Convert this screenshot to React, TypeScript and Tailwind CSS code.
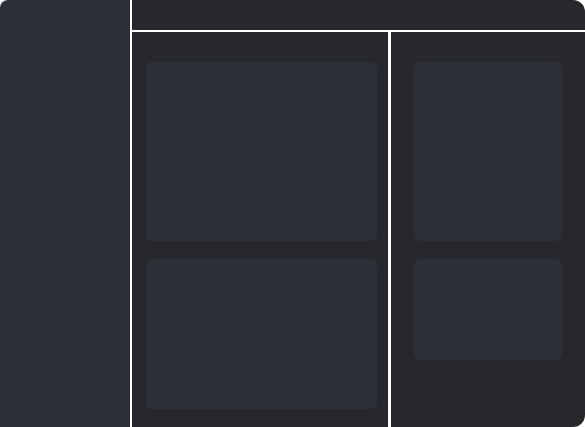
export default function App() {
  return (
    <div className="w-[585px] h-[427px] bg-white">
      <div className="w-full h-full rounded-tl-[8px] rounded-tr-[12px] rounded-br-[12px] rounded-bl-none overflow-hidden flex gap-[2px] bg-white">
        <div className="w-[130px] h-full bg-[#2c2f38]" />
        <div className="flex-1 flex flex-col gap-[2px]">
          <div className="h-[30px] bg-[#27282b]" />
          <div className="flex-1 flex gap-[3px]">
            <div className="w-[256px] bg-[#27282b] pt-[30px] pl-[14px] pr-[11px] flex flex-col gap-[18px]">
              <div className="h-[179px] rounded-[6px] bg-[#2d3039]" />
              <div className="h-[150px] rounded-[6px] bg-[#2d3039]" />
            </div>
            <div className="flex-1 bg-[#27282b] pt-[30px] pl-[23px] pr-[23px] flex flex-col gap-[18px]">
              <div className="h-[179px] rounded-[6px] bg-[#2d3039]" />
              <div className="h-[101px] rounded-[6px] bg-[#2d3039]" />
            </div>
          </div>
        </div>
      </div>
    </div>
  );
}
